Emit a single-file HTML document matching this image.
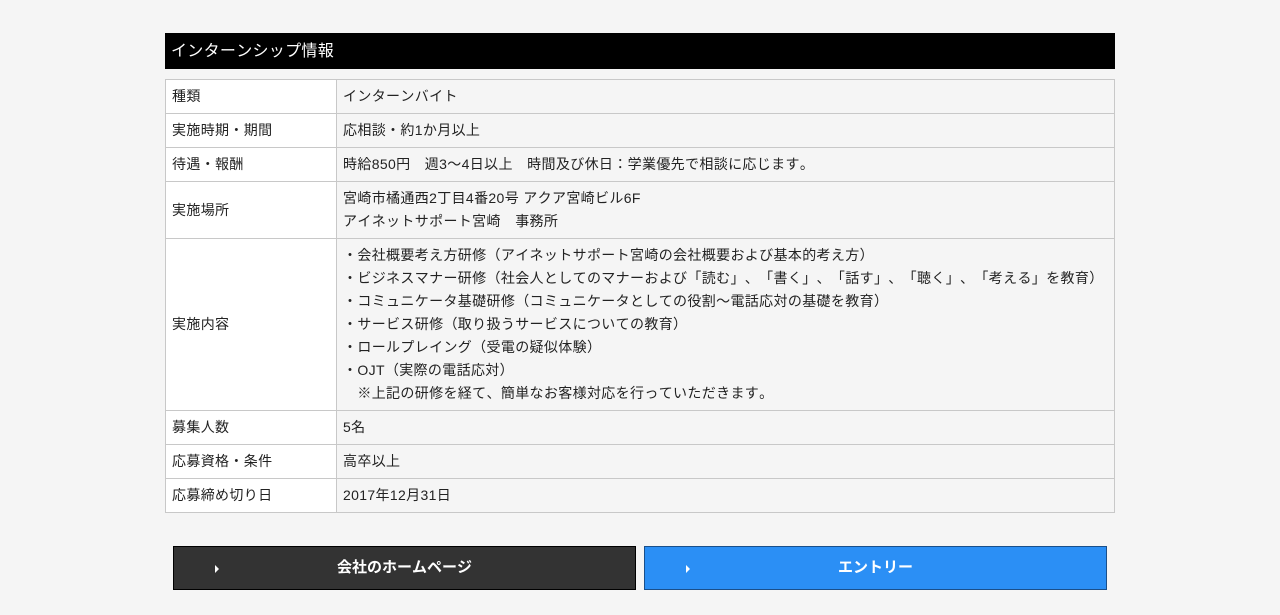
<!DOCTYPE html>
<html><head><meta charset="utf-8"><style>
body{margin:0;background:#f5f5f5;font-family:"Liberation Sans","Noto Sans CJK JP",sans-serif;color:#222;font-size:14px;text-spacing-trim:space-all;font-kerning:none}
.h{position:absolute;left:165px;top:33px;width:950px;height:36px;background:#000;color:#fff;font-size:16px;line-height:37px;box-sizing:border-box;padding-left:6px;letter-spacing:0.3px}
table{position:absolute;left:165px;top:79px;width:950px;border-collapse:collapse;letter-spacing:0.35px}
td{border:1px solid #c8c8c8;padding:0 6px;height:33px;vertical-align:middle;line-height:23px}
td.l{width:158px;background:#fff}
.b{position:absolute;top:546px;width:463px;height:44px;box-sizing:border-box;color:#fff;font-weight:bold;font-size:15px;text-align:center;line-height:42px}
.b i{position:absolute;left:41px;top:18px;width:0;height:0;border-left:4px solid #fff;border-top:4px solid transparent;border-bottom:4px solid transparent}
</style></head><body>
<div class="h">インターンシップ情報</div>
<table>
<tr><td class="l">種類</td><td>インターンバイト</td></tr>
<tr><td class="l">実施時期・期間</td><td>応相談・約1か月以上</td></tr>
<tr><td class="l">待遇・報酬</td><td>時給850円　週3〜4日以上　時間及び休日：学業優先で相談に応じます。</td></tr>
<tr><td class="l" style="height:56px">実施場所</td><td>宮崎市橘通西2丁目4番20号 アクア宮崎ビル6F<br>アイネットサポート宮崎　事務所</td></tr>
<tr><td class="l" style="height:171px">実施内容</td><td>・会社概要考え方研修（アイネットサポート宮崎の会社概要および基本的考え方）<br>・ビジネスマナー研修（社会人としてのマナーおよび「読む」、「書く」、「話す」、「聴く」、「考える」を教育）<br>・コミュニケータ基礎研修（コミュニケータとしての役割〜電話応対の基礎を教育）<br>・サービス研修（取り扱うサービスについての教育）<br>・ロールプレイング（受電の疑似体験）<br>・OJT（実際の電話応対）<br>　※上記の研修を経て、簡単なお客様対応を行っていただきます。</td></tr>
<tr><td class="l">募集人数</td><td>5名</td></tr>
<tr><td class="l">応募資格・条件</td><td>高卒以上</td></tr>
<tr><td class="l">応募締め切り日</td><td>2017年12月31日</td></tr>
</table>
<div class="b" style="left:173px;background:#333;border:1px solid #000"><i></i>会社のホームページ</div>
<div class="b" style="left:644px;background:#2b8ff5;border:1px solid #1a4f8a"><i></i>エントリー</div>
</body></html>
